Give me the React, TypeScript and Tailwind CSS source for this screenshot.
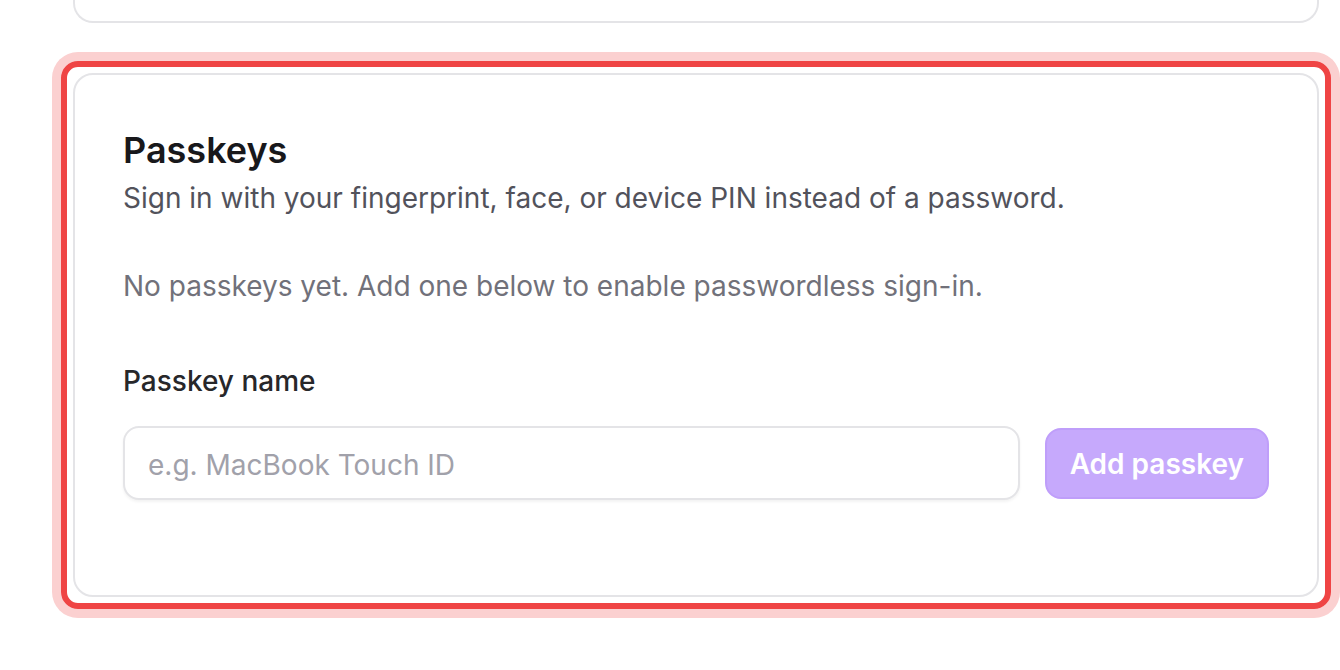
export default function App() {
  return (
    <div className="min-h-screen bg-white pl-[73px] pr-[21px] font-['Inter',sans-serif]">
      {/* previous card, only its bottom edge is visible */}
      <div className="h-[23px] rounded-b-[20px] border-2 border-t-0 border-[#e4e4e7] bg-white" />

      {/* highlighted section */}
      <div className="-mx-[12px] mt-[38px] rounded-[17px] border-[6px] border-[#ef4444] p-[6px] shadow-[0_0_0_9px_#fbd0d0]">
        <section className="rounded-[20px] border-2 border-[#e4e4e7] bg-white px-[48px] pt-[47px] pb-[95px]">
          <h2 className="text-[36px] leading-[56px] font-semibold text-[#18181b]">Passkeys</h2>
          <p className="text-[28px] leading-[40px] text-[#52525b]">
            Sign in with your fingerprint, face, or device PIN instead of a password.
          </p>

          <p className="mt-[48px] text-[28px] leading-[40px] text-[#71717a]">
            No passkeys yet. Add one below to enable passwordless sign-in.
          </p>

          <label className="mt-[55px] block text-[28px] leading-[40px] font-medium text-[#27272a]">
            Passkey name
          </label>
          <div className="mt-[25px] flex items-center gap-[25px]">
            <input
              type="text"
              placeholder="e.g. MacBook Touch ID"
              className="h-[74px] min-w-0 flex-1 rounded-[16px] border-2 border-[#e4e4e7] bg-white px-[23px] pt-[3px] text-[28px] text-[#18181b] shadow-[0_2px_3px_rgba(0,0,0,0.05)] outline-none placeholder:text-[#a1a1aa]"
            />
            <button className="h-[71px] shrink-0 whitespace-nowrap rounded-[16px] border-2 border-[#bf9efa] bg-[#c6a9fc] px-[23px] pt-[2px] text-[28px] font-semibold text-white">
              Add passkey
            </button>
          </div>
        </section>
      </div>
    </div>
  )
}
